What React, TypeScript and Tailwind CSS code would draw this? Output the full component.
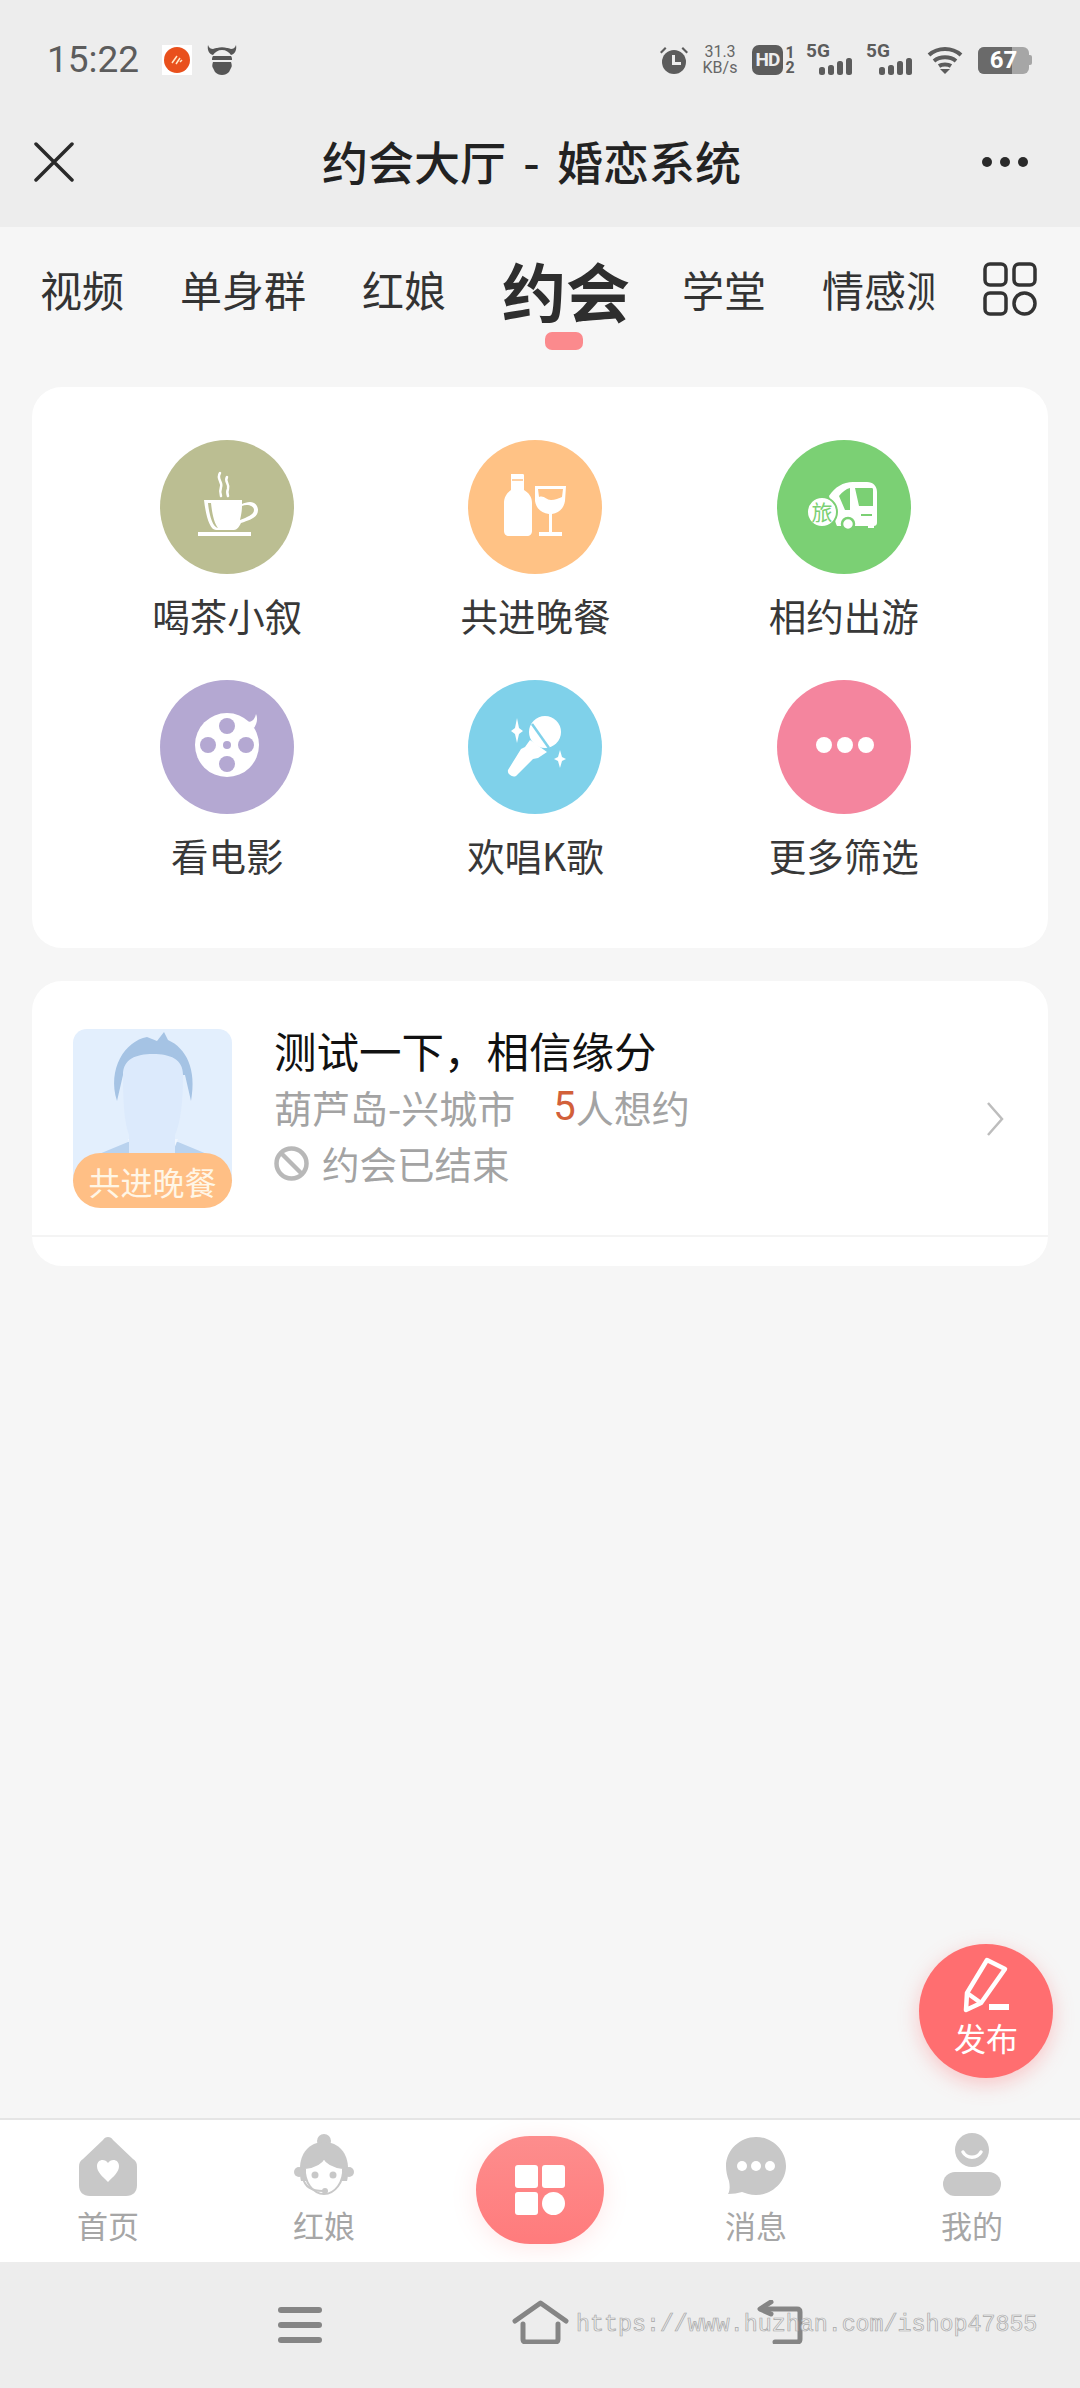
const cjk = 'font-["Noto_Sans_CJK_SC","Noto_Sans",sans-serif]';

function Alarm() {
  return (
    <svg width="30" height="30" viewBox="0 0 30 30" fill="#5c5c5c">
      <circle cx="15" cy="17" r="12" />
      <path d="M13 10h3v7h6v3h-9z" fill="#ededed" />
      <path d="M1 7l5-5 1.500 1.500-5 5zM29 7l-5-5-1.500 1.500 5 5z" />
    </svg>
  );
}

function Signal() {
  return (
    <div className="flex flex-col w-[47px] h-[30px] relative">
      <span className="absolute left-0 top-[-4px] text-[19px] leading-[20px] font-bold text-[#5c5c5c] font-['Roboto',sans-serif]">5G</span>
      <svg className="absolute right-0 bottom-0" width="34" height="17" viewBox="0 0 34 17" fill="#5c5c5c">
        <rect x="0" y="9" width="6" height="8" rx="2.500" />
        <rect x="9" y="7" width="6" height="10" rx="2.500" />
        <rect x="18" y="3" width="6" height="14" rx="2.500" />
        <rect x="27" y="0" width="6" height="17" rx="2.500" />
      </svg>
    </div>
  );
}

function StatusBar() {
  return (
    <div className="h-[120px] flex items-center pl-[47px] pr-[48px] text-[#5c5c5c]">
      <span className="text-[37px] leading-[40px] font-['Roboto',sans-serif] w-[115px]">15:22</span>
      <svg width="30" height="30" viewBox="0 0 30 30">
        <rect width="30" height="30" fill="#fff" />
        <circle cx="15" cy="15" r="13" fill="#e9501c" />
        <path d="M10 18l5-7M14 19l4-6M18 17l2-2" stroke="#ffe9c8" strokeWidth="1.500" />
      </svg>
      <svg className="ml-[15px]" width="30" height="30" viewBox="0 0 30 30" fill="#565656">
        <path d="M1 0c-1 5 1 9 5 10 2-3 5-5 9-5s7 2 9 5c4-1 6-5 5-10-1 3-3 4-5 4-2-1-3-1-4-1-3-1-7-1-10 0-1 0-2 0-4 1-2 0-4-1-5-4z" />
        <path d="M6 11h18c1 1 1 3 1 4H5c0-1 0-3 1-4z" />
        <path d="M6 17h18c1 3 1 5 0 6l-2 4c-2 2-4 3-7 3s-5-1-7-3l-2-4c-1-1-1-3 0-6z" />
      </svg>
      <div className="ml-auto flex items-center">
        <Alarm />
        <div className="ml-[12px] w-[38px] flex flex-col items-center text-[16px] leading-[16px] font-['Roboto',sans-serif] text-[#666]">
          <span>31.3</span>
          <span>KB/s</span>
        </div>
        <div className="ml-[13px] w-[31px] h-[30px] rounded-[7px] bg-[#5c5c5c] flex items-center justify-center text-[#ededed] text-[19px] tracking-[-1px] font-bold font-['Roboto',sans-serif]">HD</div>
        <div className="ml-[2px] w-[10px] flex flex-col items-center text-[16px] leading-[15px] font-bold font-['Roboto',sans-serif]">
          <span>1</span>
          <span>2</span>
        </div>
        <div className="ml-[11px]"><Signal /></div>
        <div className="ml-[13px]"><Signal /></div>
        <svg className="ml-[14px]" width="36" height="28" viewBox="0 0 36 28" fill="none" stroke="#5c5c5c" strokeWidth="4">
          <path d="M2 9c9-8 23-8 32 0M7 15c6-5 16-5 22 0M12 20c3-2 9-2 12 0" />
          <path d="M18 28l-5-5h10z" fill="#5c5c5c" stroke="none" />
        </svg>
        <div className="ml-[15px] w-[54px] h-[27px] flex items-center">
          <div className="relative w-[51px] h-[27px] rounded-[6px] bg-[#a6a6a6] overflow-hidden">
            <div className="w-[34px] h-full bg-[#6a6a6a]" />
            <span className="absolute inset-0 flex items-center justify-center text-white text-[24px] font-bold font-['Roboto',sans-serif]">67</span>
          </div>
          <div className="w-[3px] h-[10px] bg-[#a6a6a6] rounded-r-[2px]" />
        </div>
      </div>
    </div>
  );
}

function Header() {
  return (
    <div className="h-[84px] flex items-center justify-between pl-[34px] pr-[51px]">
      <svg width="40" height="40" viewBox="0 0 40 40" stroke="#2a2a2a" strokeWidth="3.500" strokeLinecap="round">
        <path d="M2 2l36 36M38 2L2 38" />
      </svg>
      <div className={`${cjk} text-[46px] leading-[56px] font-medium text-[#222] ml-[8px] pb-[5px] [word-spacing:7px]`}>约会大厅 - 婚恋系统</div>
      <svg width="48" height="12" viewBox="0 0 48 12" fill="#2a2a2a">
        <circle cx="6" cy="6" r="5" />
        <circle cx="24" cy="6" r="5" />
        <circle cx="42" cy="6" r="5" />
      </svg>
    </div>
  );
}

function Tabs() {
  return (
    <div className="h-[126px] flex items-center">
      <div className={`${cjk} w-[935px] overflow-hidden flex items-center gap-[56px] pl-[40px] text-[42px] text-[#333] whitespace-nowrap shrink-0`}>
        <span className="pb-[3px]">视频</span>
        <span className="pb-[3px]">单身群</span>
        <span className="pb-[3px]">红娘</span>
        <div className="relative shrink-0 h-[126px] flex items-center -mr-[4px]">
          <span className="text-[64px] leading-[80px] font-bold text-[#2e2e2e] w-[128px] pb-[3px]">约会</span>
          <div className="absolute left-[43px] top-[105px] w-[38px] h-[18px] rounded-[7px] bg-[#fb8a8d]" />
        </div>
        <span className="pb-[3px]">学堂</span>
        <span className="pb-[3px]">情感测</span>
      </div>
      <svg className="ml-[48px] mb-[2px]" width="54" height="54" viewBox="0 0 54 54" fill="none" stroke="#333" strokeWidth="3.500">
        <rect x="2" y="2" width="21" height="21" rx="5" />
        <rect x="31" y="2" width="21" height="21" rx="5" />
        <rect x="2" y="31" width="21" height="21" rx="5" />
        <circle cx="41.500" cy="41.500" r="10.500" />
      </svg>
    </div>
  );
}

function Cup() {
  return (
    <svg viewBox="0 0 134 134" className="w-full h-full" fill="#fff">
      <path d="M60 33c-4 6 3 9 1 14-1 3-1 6 0 9M67 37c-3 5 3 7 1 12-1 2-1 4 0 7" fill="none" stroke="#fff" strokeWidth="2.500" strokeLinecap="round" />
      <path fillRule="evenodd" d="M44 60h38v4c2-1 5-2 8-2 5 0 8 4 8 8 0 7-7 10-17 13-2 4-4 7-7 7H56c-6 0-10-13-12-30zm4 3c1 10 4 24 10 25-4-5-6-15-7-25zm34 3c0 5-1 10-2 14 7-3 14-5 14-10 0-5-8-6-12-4z" />
      <rect x="38" y="92" width="53" height="4" />
    </svg>
  );
}

function Wine() {
  return (
    <svg viewBox="0 0 134 134" className="w-full h-full" fill="#fff">
      <path d="M43 34h12c1 0 1 1 1 2v14c5 3 8 7 8 13v28c0 3-2 5-5 5H41c-3 0-5-2-5-5V63c0-6 3-10 7-13V36c0-1 0-2 0-2z" />
      <path d="M44 40h11" stroke="#ffc285" strokeWidth="1.500" />
      <path fillRule="evenodd" d="M67 46h31l-1 15c-1 7-6 12-13 13v18h10v4H71v-4h10V74c-8-1-13-6-14-13zm3 3l1 8c5-2 7 3 12 3 4 0 8-2 11-3l1-8z" />
    </svg>
  );
}

function Bus() {
  return (
    <svg viewBox="0 0 134 134" className="w-full h-full" fill="#fff">
      <path d="M52 56c6-9 14-14 24-14h14c6 0 10 4 10 10v30c0 3-1 4-4 4H60c-3-6-5-22-8-30z" />
      <path d="M62 56c3-4 7-7 11-8v22h-5zM78 48h17c1 0 1 1 1 2v16H82z" fill="#7bd074" />
      <path d="M84 74h11v2H84z" fill="#7bd074" />
      <circle cx="71" cy="84" r="6" fill="#fff" stroke="#7bd074" strokeWidth="2.500" />
      <rect x="91" y="84" width="6" height="4" />
      <circle cx="45" cy="72" r="15" stroke="#7bd074" strokeWidth="2" />
      <text x="45" y="80" textAnchor="middle" fontSize="21" fill="#7bd074" fontFamily="Noto Sans CJK SC">旅</text>
    </svg>
  );
}

function Reel() {
  return (
    <svg viewBox="0 0 134 134" className="w-full h-full">
      <circle cx="67" cy="65" r="32" fill="#fff" />
      <path d="M88 42c4 0 7-3 8-8 2 4 1 10-2 14z" fill="#fff" />
      <circle cx="67" cy="46" r="8" fill="#b4a8d2" />
      <circle cx="67" cy="84" r="8" fill="#b4a8d2" />
      <circle cx="48" cy="65" r="8" fill="#b4a8d2" />
      <circle cx="86" cy="65" r="8" fill="#b4a8d2" />
      <circle cx="67" cy="65" r="4" fill="#b4a8d2" />
    </svg>
  );
}

function Mic() {
  return (
    <svg viewBox="0 0 134 134" className="w-full h-full" fill="#fff">
      <circle cx="77" cy="52" r="16" />
      <path d="M62 60l17 12-9 6-5 1-17 17c-4 2-9-2-8-6l13-21 4-2z" />
      <path d="M64 44l17 24" stroke="#7fd1ea" strokeWidth="2.500" />
      <path d="M49 38l2 10 4 3-4 3-2 9-2-9-4-3 4-3zM92 70l2 7 4 2-4 2-2 7-2-7-4-2 4-2z" />
    </svg>
  );
}

function Dots() {
  return (
    <svg viewBox="0 0 134 134" className="w-full h-full" fill="#fff">
      <circle cx="47" cy="65" r="8" />
      <circle cx="68" cy="65" r="8" />
      <circle cx="89" cy="65" r="8" />
    </svg>
  );
}

const categories = [
  { label: '喝茶小叙', bg: 'bg-[#bbbe92]', icon: <Cup /> },
  { label: '共进晚餐', bg: 'bg-[#ffc285]', icon: <Wine /> },
  { label: '相约出游', bg: 'bg-[#7bd074]', icon: <Bus /> },
  { label: '看电影', bg: 'bg-[#b4a8d2]', icon: <Reel /> },
  { label: '欢唱K歌', bg: 'bg-[#7fd1ea]', icon: <Mic /> },
  { label: '更多筛选', bg: 'bg-[#f4859e]', icon: <Dots /> },
];

function CategoryCard() {
  return (
    <div className="bg-white rounded-[30px] pl-[41px] pr-[50px] pt-[53px] pb-[69px] grid grid-cols-3 gap-y-[41px]">
      {categories.map((c) => (
        <div key={c.label} className="flex flex-col items-center">
          <div className={`w-[134px] h-[134px] rounded-full ${c.bg}`}>{c.icon}</div>
          <div className={`${cjk} mt-[19px] mb-[2px] h-[44px] leading-[44px] text-[37.500px] text-[#383838] whitespace-nowrap`}>{c.label}</div>
        </div>
      ))}
    </div>
  );
}

function Avatar() {
  return (
    <div className="relative w-[159px] h-[179px] shrink-0">
      <svg width="159" height="179" viewBox="0 0 159 179">
        <path d="M0 14C0 6 6 0 14 0h131c8 0 14 6 14 14v140H0z" fill="#e3effd" />
        <path d="M14 130l41-17h50l41 17v30H14z" fill="#b9d2ee" />
        <path d="M55 110l8 20-5 30h44l-5-30 8-20z" fill="#f0f6fe" />
        <path d="M44 72c-10-32 8-60 30-64l10 4 7-9 4 8c18 8 29 29 23 61l-6-26H50z" fill="#a5c3e4" />
        <path d="M50 46c0-16 13-21 30-21s30 5 30 21c0 26-2 46-8 60v24H56v-24c-5-14-6-34-6-60z" fill="#dceafc" />
      </svg>
      <div className={`${cjk} absolute left-0 bottom-0 w-full h-[55px] rounded-full bg-[#ffbf85] flex items-center justify-center text-[#fff6e6] text-[32px] whitespace-nowrap`}>共进晚餐</div>
    </div>
  );
}

function DateCard() {
  return (
    <div className="mt-[33px] bg-white rounded-[30px] h-[285px]">
      <div className="h-[256px] border-b-2 border-[#f4f4f4] pl-[41px] pr-[44px] pt-[48px] flex items-start">
        <Avatar />
        <div className={`${cjk} ml-[42px] flex-1`}>
          <div className="h-[44px] leading-[42px] text-[42.500px] text-[#111]">测试一下，相信缘分</div>
          <div className="mt-[13px] h-[44px] leading-[42px] text-[38px] text-[#a3a3a3] flex">
            <span>葫芦岛-兴城市</span>
            <span className="ml-[38px] text-[#d2603a] font-['Roboto',sans-serif] text-[40px]">5</span>
            <span>人想约</span>
          </div>
          <div className="mt-[11px] h-[44px] flex items-center text-[37.500px] text-[#a3a3a3]">
            <svg width="35" height="35" viewBox="0 0 35 35" fill="none" stroke="#b8b8b8" strokeWidth="4.500">
              <circle cx="17.500" cy="17.500" r="15" />
              <path d="M7 7l21 21" />
            </svg>
            <span className="ml-[13px]">约会已结束</span>
          </div>
        </div>
        <svg className="mt-[73px]" width="18" height="34" viewBox="0 0 18 34" fill="none" stroke="#bdbdbd" strokeWidth="2.500">
          <path d="M2 1l14 16L2 33" />
        </svg>
      </div>
    </div>
  );
}

function HomeIcon() {
  return (
    <svg width="58" height="60" viewBox="0 0 58 60">
      <path d="M29 1c2 0 4 1 5 3l20 19c3 2 4 4 4 8v18c0 7-4 11-11 11H11C4 60 0 56 0 49V31c0-4 1-6 4-8L24 4c1-2 3-3 5-3z" fill="#c8c8c8" />
      <path d="M29 46c-6-6-11-10-11-16 0-7 8-8 11-3 3-5 11-4 11 3 0 6-5 10-11 16z" fill="#fff" />
    </svg>
  );
}

function MatchmakerIcon() {
  return (
    <svg width="60" height="62" viewBox="0 0 60 62">
      <circle cx="30" cy="7" r="7" fill="#c8c8c8" />
      <path d="M30 8c15 0 24 12 24 26 0 6 0 10-1 13H7c-1-3-1-7-1-13C6 20 15 8 30 8z" fill="#c8c8c8" />
      <circle cx="5" cy="38" r="5" fill="#c8c8c8" />
      <circle cx="55" cy="38" r="5" fill="#c8c8c8" />
      <path d="M30 24c3 6 12 9 19 10 1 14-8 26-19 26S10 48 11 34c8-1 16-4 19-10z" fill="#fff" stroke="#c8c8c8" strokeWidth="2" />
      <circle cx="21" cy="41" r="3.500" fill="#c8c8c8" />
      <circle cx="39" cy="41" r="3.500" fill="#c8c8c8" />
      <path d="M9 44c2 10 10 13 20 13" fill="none" stroke="#c8c8c8" strokeWidth="2" />
      <circle cx="31" cy="57" r="3" fill="#c8c8c8" />
    </svg>
  );
}

function ChatIcon() {
  return (
    <svg width="60" height="60" viewBox="0 0 60 60">
      <path d="M30 1c16 0 30 13 30 29S46 59 30 59c-6 0-10-2-14-3-4 1-9 2-14 2 2-3 2-8 1-13C1 40 0 35 0 30 0 14 14 1 30 1z" fill="#c8c8c8" />
      <circle cx="16" cy="30" r="5" fill="#fff" />
      <circle cx="30" cy="30" r="5" fill="#fff" />
      <circle cx="44" cy="30" r="5" fill="#fff" />
    </svg>
  );
}

function MeIcon() {
  return (
    <svg width="58" height="63" viewBox="0 0 58 63">
      <circle cx="29" cy="17" r="17" fill="#c8c8c8" />
      <path d="M20 19c4 7 14 7 18 0" fill="none" stroke="#fff" strokeWidth="3.500" strokeLinecap="round" />
      <rect x="0" y="39" width="58" height="24" rx="12" fill="#c8c8c8" />
    </svg>
  );
}

function NavItem({ label, icon }: { label: string; icon: React.ReactNode }) {
  return (
    <div className="flex flex-col items-center">
      <div className="h-[60px] flex items-end">{icon}</div>
      <div className={`${cjk} mt-[9px] h-[40px] leading-[40px] text-[31px] text-[#a6a6a6]`}>{label}</div>
    </div>
  );
}

function BottomNav() {
  return (
    <div className="h-[144px] bg-white border-t-2 border-[#e5e5e5] grid grid-cols-5 pt-[16px] shrink-0">
      <NavItem label="首页" icon={<HomeIcon />} />
      <NavItem label="红娘" icon={<MatchmakerIcon />} />
      <div className="flex justify-center">
        <div className="w-[128px] h-[108px] rounded-full bg-gradient-to-b from-[#fd8d8d] to-[#ff7b7c] shadow-[0_4px_24px_rgba(255,125,125,0.18)] flex items-center justify-center">
          <svg width="50" height="50" viewBox="0 0 50 50" fill="#fff">
            <rect x="0" y="0" width="23" height="23" rx="3" />
            <rect x="27" y="0" width="23" height="23" rx="3" />
            <rect x="0" y="27" width="23" height="23" rx="3" />
            <circle cx="38.500" cy="38.500" r="11.500" />
          </svg>
        </div>
      </div>
      <NavItem label="消息" icon={<ChatIcon />} />
      <NavItem label="我的" icon={<MeIcon />} />
    </div>
  );
}

function SystemBar() {
  return (
    <div className="relative h-[126px] bg-[#ededed] px-[180px] pt-[38px] grid grid-cols-3 justify-items-center items-start shrink-0">
      <svg width="44" height="36" viewBox="0 0 44 36" fill="#858585" className="mt-[7px]">
        <rect width="44" height="6" rx="3" />
        <rect y="15" width="44" height="6" rx="3" />
        <rect y="30" width="44" height="6" rx="3" />
      </svg>
      <svg width="57" height="44" viewBox="0 0 57 44" fill="none" stroke="#858585" strokeWidth="5" strokeLinecap="round" strokeLinejoin="round">
        <path d="M3 21L28.500 3 54 21" />
        <path d="M11 24v15c0 2 1 3 3 3h29c2 0 3-1 3-3V24" />
      </svg>
      <svg width="46" height="44" viewBox="0 0 46 44" fill="none" stroke="#858585" strokeWidth="5" strokeLinecap="round" strokeLinejoin="round">
        <path d="M14 2L3 9l11 5" />
        <path d="M4 9h36c2 0 3 1 3 3v27c0 2-1 3-3 3H18" />
      </svg>
      <span className="absolute left-[576px] top-[43px] text-[23.300px] leading-[40px] font-['Liberation_Mono',monospace] text-[#ededed] [-webkit-text-stroke:0.7px_#a8a8a8] whitespace-nowrap">https://www.huzhan.com/ishop47855</span>
    </div>
  );
}

export default function App() {
  return (
    <div className="relative w-[1080px] h-[2388px] bg-[#f6f6f6] flex flex-col overflow-hidden">
      <div className="h-[227px] bg-[#ededed] shrink-0">
        <StatusBar />
        <Header />
      </div>
      <Tabs />
      <main className="flex-1 px-[32px] pt-[34px]">
        <CategoryCard />
        <DateCard />
      </main>

      {/* publish button floats over the list */}
      <div className="absolute left-[919px] top-[1944px] w-[134px] h-[134px] rounded-full bg-[#ff6e70] shadow-[0_6px_20px_rgba(255,110,112,0.35)] flex flex-col items-center">
        <svg className="mt-[13px]" width="46" height="56" viewBox="0 0 46 56" fill="none" stroke="#fff" strokeWidth="4.500" strokeLinejoin="round">
          <path d="M24 3l18 9-24 34-15 7 1-17z" />
          <path d="M4 36l14 10" />
          <path d="M26 50h20" strokeWidth="6" />
        </svg>
        <span className={`${cjk} mt-[2px] text-[32px] leading-[44px] text-white`}>发布</span>
      </div>

      <BottomNav />
      <SystemBar />
    </div>
  );
}
